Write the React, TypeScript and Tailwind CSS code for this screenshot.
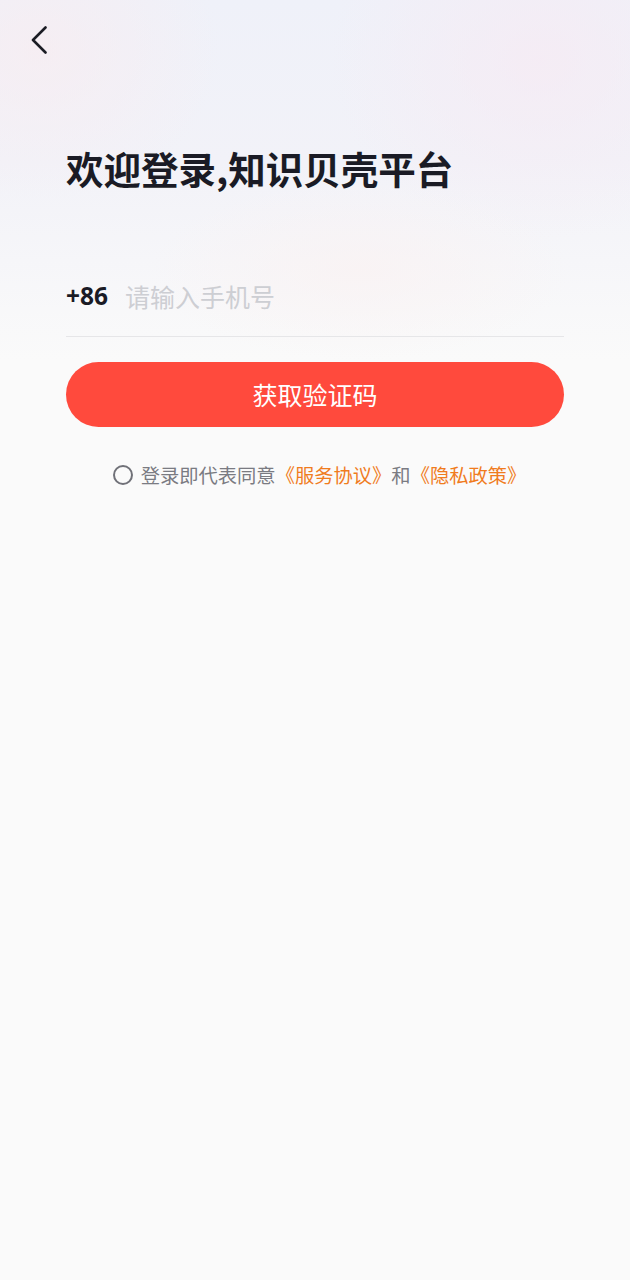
import React from "react";

export default function App() {
  return (
    <div
      className="relative w-[630px] h-[1280px] bg-[#fafafa] overflow-hidden"
      style={{ fontFamily: '"Noto Sans CJK SC", "Noto Sans", sans-serif' }}
    >
      <div className="absolute inset-x-0 top-0 h-[360px] bg-[linear-gradient(180deg,#eff1f9_0%,#f2f2f8_45%,#fafafa_100%)]" />
      <div className="absolute top-[-120px] right-[-120px] w-[420px] h-[360px] rounded-full bg-[radial-gradient(closest-side,rgba(246,234,243,0.75),rgba(246,234,243,0))]" />
      <div className="absolute top-[-100px] left-[-140px] w-[360px] h-[300px] rounded-full bg-[radial-gradient(closest-side,rgba(248,236,240,0.7),rgba(248,236,240,0))]" />
      <div className="absolute top-[180px] left-[150px] w-[420px] h-[180px] rounded-full bg-[radial-gradient(closest-side,rgba(250,242,242,0.7),rgba(250,242,242,0))]" />

      <div className="relative flex flex-col">
        <div className="pt-[26px] pl-[26px]">
          <svg width="28" height="28" viewBox="0 0 28 28" fill="none">
            <path d="M19.5 1.5 L7 14 L19.5 26.5" stroke="#1b1c24" strokeWidth="2.6" strokeLinecap="round" strokeLinejoin="round" />
          </svg>
        </div>

        <div className="px-[66px]">
          <h1 className="mt-[92px] text-[37.5px] leading-[44px] font-bold text-[#1a1b25]">
            欢迎登录,知识贝壳平台
          </h1>

          <div className="mt-[90px] flex items-center pb-[24px] border-b border-[#e6e6e8]">
            <span className="text-[24.5px] leading-[32px] font-bold text-[#1a1b25]" style={{ fontFamily: '"Open Sans", "Noto Sans", sans-serif' }}>+86</span>
            <span className="ml-[17px] text-[25px] leading-[32px] text-[#cdced3]">请输入手机号</span>
          </div>

          <button className="mt-[25px] w-full h-[65px] rounded-full bg-[#ff4a3d] text-white text-[25px] flex items-center justify-center">
            获取验证码
          </button>

          <div className="mt-[38px] flex items-center justify-center pl-[9px]">
            <span className="w-[20px] h-[20px] rounded-full border-2 border-[#707178]" />
            <span className="ml-[8px] text-[19.3px] leading-[20px] text-[#7a7b82]">
              登录即代表同意<span className="text-[#f07c1e]">《服务协议》</span>和<span className="text-[#f07c1e]">《隐私政策》</span>
            </span>
          </div>
        </div>
      </div>
    </div>
  );
}
